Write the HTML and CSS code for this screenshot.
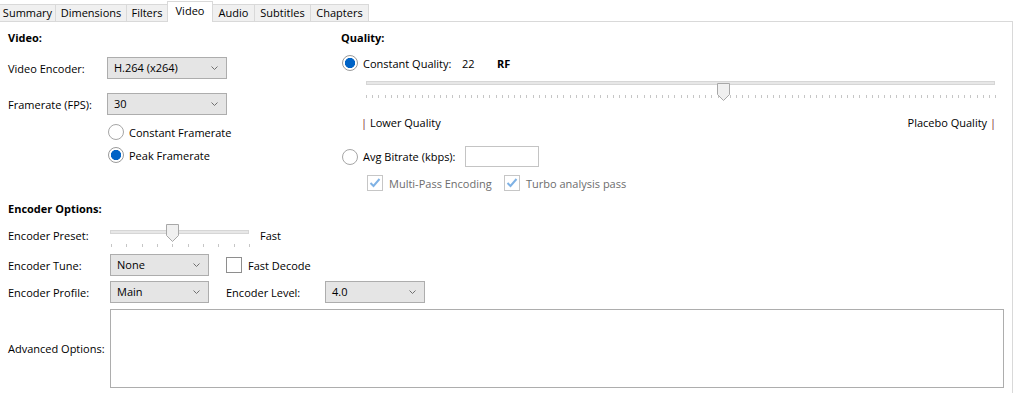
FILE: index.html
```html
<!DOCTYPE html>
<html lang="en">
<head>
    <meta charset="UTF-8">
    <title>Video</title>
    <link rel="stylesheet" href="styles.css">
</head>
<body>
    <div class="tabs">
        <div class="tab tab-summary">Summary</div>
        <div class="tab tab-dimensions">Dimensions</div>
        <div class="tab tab-filters">Filters</div>
        <div class="tab tab-video active">Video</div>
        <div class="tab tab-audio">Audio</div>
        <div class="tab tab-subtitles">Subtitles</div>
        <div class="tab tab-chapters">Chapters</div>
    </div>

    <div class="panel">
        <div class="top">
            <div class="col-video">
                <div class="title">Video:</div>
                <div class="row field encoder-row">
                    <span class="label">Video Encoder:</span>
                    <div class="select wide">H.264 (x264)
                        <svg class="chev" width="7" height="4" viewBox="0 0 7 4"><polyline points="0.5,0.5 3.5,3.5 6.5,0.5" fill="none" stroke="#707070"/></svg>
                    </div>
                </div>
                <div class="row field fps-row">
                    <span class="label">Framerate (FPS):</span>
                    <div class="select wide">30
                        <svg class="chev" width="7" height="4" viewBox="0 0 7 4"><polyline points="0.5,0.5 3.5,3.5 6.5,0.5" fill="none" stroke="#707070"/></svg>
                    </div>
                </div>
                <div class="row opt cfr-row">
                    <span class="radio"></span>Constant Framerate
                </div>
                <div class="row opt pfr-row">
                    <span class="radio on"></span>Peak Framerate
                </div>
            </div>

            <div class="col-quality">
                <div class="title">Quality:</div>
                <div class="row opt cq-row">
                    <span class="radio on"></span>
                    <span class="cq-label">Constant Quality:</span>
                    <span class="cq-value">22</span>
                    <b>RF</b>
                </div>
                <div class="slider quality-slider">
                    <div class="track"></div>
                    <div class="ticks"></div>
                    <svg class="thumb" style="left: 351px" width="13" height="18" viewBox="0 0 13 18"><path d="M0.5 0.5 H12.5 V11.5 L6.5 17.5 L0.5 11.5 Z" fill="#f0f0f0" stroke="#a8a8a8"/></svg>
                </div>
                <div class="row ends">
                    <span><i class="bar">|</i> Lower Quality</span>
                    <span>Placebo Quality <i class="bar">|</i></span>
                </div>
                <div class="row opt abr-row">
                    <span class="radio"></span>
                    <span class="abr-label">Avg Bitrate (kbps):</span>
                    <span class="input"></span>
                </div>
                <div class="row pass-row disabled">
                    <span class="check">
                        <svg width="14" height="14" viewBox="0 0 14 14"><polyline points="2.5,7 5.5,10 11.5,3" fill="none" stroke="#7fb2e5" stroke-width="2"/></svg>
                    </span>
                    <span class="pass-label">Multi-Pass Encoding</span>
                    <span class="check">
                        <svg width="14" height="14" viewBox="0 0 14 14"><polyline points="2.5,7 5.5,10 11.5,3" fill="none" stroke="#7fb2e5" stroke-width="2"/></svg>
                    </span>
                    <span>Turbo analysis pass</span>
                </div>
            </div>
        </div>

        <div class="encoder">
            <div class="title">Encoder Options:</div>
            <div class="row preset-row">
                <span class="label-enc">Encoder Preset:</span>
                <div class="slider preset-slider">
                    <div class="track"></div>
                    <div class="ticks"></div>
                    <svg class="thumb" style="left: 56px" width="13" height="18" viewBox="0 0 13 18"><path d="M0.5 0.5 H12.5 V11.5 L6.5 17.5 L0.5 11.5 Z" fill="#f0f0f0" stroke="#a8a8a8"/></svg>
                </div>
                <span class="preset-name">Fast</span>
            </div>
            <div class="row field tune-row">
                <span class="label-enc">Encoder Tune:</span>
                <div class="select narrow">None
                    <svg class="chev" width="7" height="4" viewBox="0 0 7 4"><polyline points="0.5,0.5 3.5,3.5 6.5,0.5" fill="none" stroke="#707070"/></svg>
                </div>
                <span class="check fast-decode"></span>
                <span>Fast Decode</span>
            </div>
            <div class="row field profile-row">
                <span class="label-enc">Encoder Profile:</span>
                <div class="select narrow">Main
                    <svg class="chev" width="7" height="4" viewBox="0 0 7 4"><polyline points="0.5,0.5 3.5,3.5 6.5,0.5" fill="none" stroke="#707070"/></svg>
                </div>
                <span class="level-label">Encoder Level:</span>
                <div class="select level">4.0
                    <svg class="chev" width="7" height="4" viewBox="0 0 7 4"><polyline points="0.5,0.5 3.5,3.5 6.5,0.5" fill="none" stroke="#707070"/></svg>
                </div>
            </div>
            <div class="row advanced-row">
                <span class="label-enc">Advanced Options:</span>
                <div class="textarea"></div>
            </div>
        </div>
    </div>
</body>
</html>
```

FILE: styles.css
```css
body {
    margin: 0;
    font-family: "Open Sans", sans-serif;
    font-size: 11px;
    color: #000;
    background: #fff;
}

/* tab strip */
.tabs {
    display: flex;
    align-items: flex-end;
    height: 21px;
}
.tab {
    height: 17px;
    line-height: 15px;
    text-align: center;
    box-sizing: border-box;
    border: 1px solid #d9d9d9;
    border-bottom: none;
    margin-right: -1px;
    background: #f0f0f0;
}
.tab-summary { width: 56px; border-left: none; }
.tab-dimensions { width: 72px; }
.tab-filters { width: 42px; }
.tab-video { width: 46px; }
.tab-audio { width: 43px; }
.tab-subtitles { width: 57px; }
.tab-chapters { width: 59px; }
.tab.active {
    position: relative;
    z-index: 1;
    height: 21px;
    line-height: 18px;
    margin-bottom: -1px;
    background: #fff;
}

.panel {
    width: 1013px;
    height: 372px;
    box-sizing: border-box;
    border-top: 1px solid #d9d9d9;
    border-right: 1px solid #d9d9d9;
    padding: 6px 0 0 8px;
}

.title {
    height: 20px;
    line-height: 19px;
    font-weight: 700;
}
.row {
    display: flex;
    align-items: center;
}

.top {
    display: flex;
}
.col-video {
    width: 333px;
}
.label {
    width: 99px;
}
.field {
    height: 22px;
}
.encoder-row { margin-top: 9px; }
.fps-row { margin-top: 14px; }
.opt {
    height: 20px;
}
.cfr-row { margin-top: 7px; margin-left: 100px; }
.pfr-row { margin-top: 3px; margin-left: 100px; }

.select {
    height: 22px;
    box-sizing: border-box;
    border: 1px solid #adadad;
    background: #e5e5e5;
    display: flex;
    align-items: center;
    justify-content: space-between;
    padding: 0 8px 1px 6px;
}
.select.wide { width: 120px; }
.select.narrow { width: 99px; }
.select.level { width: 100px; }
.chev { margin-top: 1px; }

.radio {
    width: 16px;
    height: 16px;
    box-sizing: border-box;
    border: 1px solid #a6a6a6;
    border-radius: 50%;
    background: #fff;
    margin-right: 5px;
}
.radio.on {
    border-color: #9a9a9a;
    background: radial-gradient(circle, #0063c6 0 4.8px, #fff 5.4px);
}

/* quality column */
.col-quality {
    width: 660px;
}
.cq-row { margin-top: 5px; margin-left: 1px; }
.cq-label { width: 99px; }
.cq-value { width: 35px; }

.slider {
    position: relative;
}
.track {
    height: 4px;
    box-sizing: border-box;
    border: 1px solid #d6d6d6;
    background: #e7e7e7;
}
.ticks {
    height: 3px;
}
.thumb {
    position: absolute;
    top: 2px;
}
.quality-slider {
    width: 630px;
    height: 26px;
    margin: 7px 0 0 25px;
}
.quality-slider .track { margin-top: 8px; width: 629px; }
.quality-slider .ticks {
    margin-top: 10px;
    background: repeating-linear-gradient(90deg, #c6c6c6 0 1px, transparent 1px 6.167px);
}

.ends {
    height: 16px;
    width: 635px;
    margin: 7px 0 0 20px;
    justify-content: space-between;
}
.bar {
    font-style: normal;
    color: #7b1a2e;
}

.abr-row { height: 21px; margin-top: 16px; margin-left: 1px; }
.abr-label { width: 102px; }
.input {
    width: 74px;
    height: 21px;
    box-sizing: border-box;
    border: 1px solid #c4c4c4;
    background: #fff;
}

.check {
    width: 16px;
    height: 16px;
    box-sizing: border-box;
    border: 1px solid #8e8e8e;
    background: #fff;
    margin-right: 6px;
    display: flex;
}
.pass-row {
    height: 18px;
    margin: 7px 0 0 26px;
}
.disabled {
    color: #6d6d6d;
}
.disabled .check {
    border-color: #c6c6c6;
}
.pass-label { width: 115px; }

/* encoder options */
.encoder .title { margin-top: 7px; }
.label-enc { width: 102px; }
.preset-row {
    height: 24px;
    margin-top: 4px;
}
.preset-slider {
    width: 140px;
    height: 24px;
}
.preset-slider .track { margin-top: 7px; width: 139px; }
.preset-slider .ticks {
    margin: 10px 0 0 1px;
    height: 3px;
    background: repeating-linear-gradient(90deg, #c6c6c6 0 1px, transparent 1px 15.33px);
}
.preset-slider .thumb { top: 1px; }
.preset-name { margin-left: 10px; margin-top: 1px; }

.tune-row { margin-top: 7px; }
.fast-decode { margin-left: 17px; }
.profile-row { margin-top: 5px; }
.level-label { width: 99px; margin-left: 17px; }

.advanced-row {
    height: 79px;
    margin-top: 6px;
}
.textarea {
    width: 894px;
    height: 79px;
    box-sizing: border-box;
    border: 1px solid #adadad;
    background: #fff;
}
```
